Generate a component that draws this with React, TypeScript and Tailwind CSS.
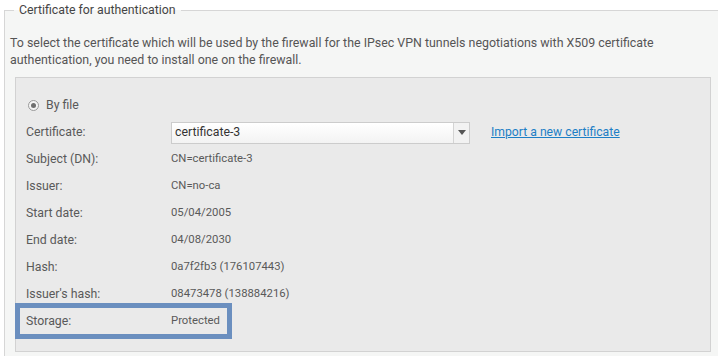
const rows: [string, string][] = [
  ["Subject (DN):", "CN=certificate-3"],
  ["Issuer:", "CN=no-ca"],
  ["Start date:", "05/04/2005"],
  ["End date:", "04/08/2030"],
  ["Hash:", "0a7f2fb3 (176107443)"],
  ["Issuer's hash:", "08473478 (138884216)"],
];

function InfoRow({ label, value }: { label: string; value: string }) {
  return (
    <div className="flex h-[27px] items-center">
      <div className="w-[145px] shrink-0 text-[12.3px] text-[#595959]">{label}</div>
      <div className="text-[11.3px] text-[#595959]">{value}</div>
    </div>
  );
}

export default function App() {
  return (
    <div
      className="h-[356px] w-[718px] overflow-hidden bg-white"
      style={{ fontFamily: "Roboto, 'Liberation Sans', sans-serif" }}
    >
      <fieldset className="ml-[4px] w-[730px] border-l border-t border-[#d6d6d6] bg-[#f5f6f5] pb-[20px] pl-[5px] pt-[14px]">
        <legend className="ml-[4px] px-[5px] text-[12.3px] leading-[20px] text-[#444]">
          Certificate for authentication
        </legend>
        <p className="text-[12.4px] leading-[17px] text-[#555]">
          To select the certificate which will be used by the firewall for the IPsec VPN tunnels negotiations with X509 certificate
          <br />
          authentication, you need to install one on the firewall.
        </p>

        <div className="ml-[5px] mt-[9px] w-[696px] border border-[#d2d2d2] bg-[#eaeaea] pb-[12px] pl-[10px] pt-[14px]">
          <div className="flex h-[27px] items-center">
            <span className="ml-[2px] flex h-[11px] w-[11px] items-center justify-center rounded-full border border-[#9a9a9a] bg-[#f4f4f4]">
              <span className="h-[5px] w-[5px] rounded-full bg-[#6f6f6f]" />
            </span>
            <span className="ml-[7px] text-[12.3px] text-[#595959]">By file</span>
          </div>

          <div className="flex h-[27px] items-center">
            <div className="w-[145px] shrink-0 text-[12.3px] text-[#595959]">Certificate:</div>
            <div className="flex h-[22px] w-[299px] border border-[#cccccc] bg-gradient-to-b from-white to-[#f3f3f3]">
              <div className="flex flex-1 items-center pl-[3px] text-[12.3px] text-[#333]">certificate-3</div>
              <div className="flex w-[16px] items-center justify-center border-l border-[#d4d4d4] bg-[#f2f2f2]">
                <svg width="8" height="5" viewBox="0 0 8 5">
                  <path d="M0 0h8L4 5z" fill="#555" />
                </svg>
              </div>
            </div>
            <a href="#" className="ml-[21px] text-[12.2px] text-[#1d7fc6] underline">
              Import a new certificate
            </a>
          </div>

          {rows.map(([label, value]) => (
            <InfoRow key={label} label={label} value={value} />
          ))}

          <div className="-ml-[11px] -mt-[5px] flex h-[36px] w-[217px] items-center border-[5px] border-[#6b8fbf] pl-[6px]">
            <div className="w-[145px] shrink-0 text-[12.3px] text-[#595959]">Storage:</div>
            <div className="text-[11.3px] text-[#595959]">Protected</div>
          </div>
        </div>
      </fieldset>
    </div>
  );
}
